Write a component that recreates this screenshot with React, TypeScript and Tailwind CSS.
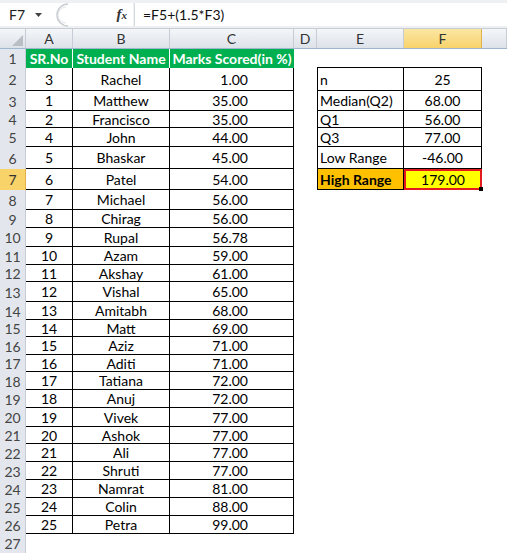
import React from "react";

const students: [number, string, string][] = [
  [3, "Rachel", "1.00"],
  [1, "Matthew", "35.00"],
  [2, "Francisco", "35.00"],
  [4, "John", "44.00"],
  [5, "Bhaskar", "45.00"],
  [6, "Patel", "54.00"],
  [7, "Michael", "56.00"],
  [8, "Chirag", "56.00"],
  [9, "Rupal", "56.78"],
  [10, "Azam", "59.00"],
  [11, "Akshay", "61.00"],
  [12, "Vishal", "65.00"],
  [13, "Amitabh", "68.00"],
  [14, "Matt", "69.00"],
  [15, "Aziz", "71.00"],
  [16, "Aditi", "71.00"],
  [17, "Tatiana", "72.00"],
  [18, "Anuj", "72.00"],
  [19, "Vivek", "77.00"],
  [20, "Ashok", "77.00"],
  [21, "Ali", "77.00"],
  [22, "Shruti", "77.00"],
  [23, "Namrat", "81.00"],
  [24, "Colin", "88.00"],
  [25, "Petra", "99.00"],
];

// row heights taken from the screenshot (rows 1..27)
const rowHeights = [
  "h-[19px]", "h-[23px]", "h-[20px]", "h-[17px]", "h-[19px]", "h-[22px]", "h-[21px]",
  "h-[20px]", "h-[18px]", "h-[19px]", "h-[18px]", "h-[17px]", "h-[20px]", "h-[18px]",
  "h-[17px]", "h-[18px]", "h-[17px]", "h-[18px]", "h-[18px]", "h-[19px]", "h-[17px]",
  "h-[18px]", "h-[18px]", "h-[18px]", "h-[18px]", "h-[18px]", "h-[19px]",
];

const stats: [string, string][] = [
  ["n", "25"],
  ["Median(Q2)", "68.00"],
  ["Q1", "56.00"],
  ["Q3", "77.00"],
  ["Low Range", "-46.00"],
  ["High Range", "179.00"],
];

// G is cut off at the right edge, so its letter doesn't show
const cols = [
  { name: "A", w: "w-[47px]" },
  { name: "B", w: "w-[97px]" },
  { name: "C", w: "w-[124px]" },
  { name: "D", w: "w-[23px]" },
  { name: "E", w: "w-[87px]" },
  { name: "F", w: "w-[78px]" },
  { name: "", w: "w-[25px]" },
];

const FormulaBar = () => (
  <div className="flex h-[29px] items-stretch border-b border-[#c8ccd3] bg-[#eef0f3] pt-[3px] pb-[2px]">
    <div className="flex w-[46px] items-center justify-between bg-white pl-[9px] pr-[4px] text-[14px] text-[#222]">
      <span>F7</span>
      <svg width="7" height="4" viewBox="0 0 7 4">
        <path d="M0 0h7L3.5 4z" fill="#444" />
      </svg>
    </div>
    <div className="flex w-[87px] items-center bg-white">
      <svg width="22" height="24" viewBox="0 0 22 24" className="ml-[2px]">
        <path d="M20 1 A11 11 0 0 0 20 23" fill="none" stroke="#c9ccd1" strokeWidth="1.5" />
        <path d="M18 4 A8 8 0 0 0 18 20" fill="none" stroke="#e3e5e8" strokeWidth="1" />
      </svg>
      <span className="ml-auto mr-[6px] font-['Liberation_Serif',serif] text-[15px] italic font-bold text-[#333]">
        f<span className="text-[11px]">x</span>
      </span>
    </div>
    <div className="ml-[1px] flex flex-1 items-center border-l border-[#d6d9de] bg-white pl-[8px] text-[14px] text-[#111]">
      =F5+(1.5*F3)
    </div>
  </div>
);

const HeaderRow = () => (
  <div className="flex h-[20px] border-b border-[#9eb6ce]">
    <div className="flex w-[26px] items-end justify-end border-r border-[#c5ccd6] bg-gradient-to-b from-[#f4f6f9] to-[#dde2e9] p-[2px]">
      <svg width="11" height="11" viewBox="0 0 11 11">
        <path d="M11 0V11H0z" fill="#b9bec6" />
      </svg>
    </div>
    {cols.map((c, i) => (
      <div
        key={i}
        className={
          c.name === "F"
            ? `${c.w} flex items-center justify-center border-r border-[#e2b24a] bg-gradient-to-b from-[#fbe6a3] to-[#f8d36a] text-[14px] text-[#333]`
            : `${c.w} flex items-center justify-center border-r border-[#c5ccd6] bg-gradient-to-b from-[#f4f6f9] to-[#dde2e9] text-[14px] text-[#333]`
        }
      >
        {c.name}
      </div>
    ))}
  </div>
);

const RowNum = ({ n }: { n: number }) => (
  <div
    className={
      n === 7
        ? "flex w-[26px] items-center justify-center border-r border-[#e2b24a] bg-[#f8d36a] text-[14px] text-[#333]"
        : "flex w-[26px] items-center justify-center border-r border-[#c5ccd6] bg-[#e3e7ed] text-[14px] text-[#444]"
    }
  >
    {n}
  </div>
);

export default function App() {
  return (
    <div className="h-[553px] w-[507px] overflow-hidden bg-white font-['Lato',sans-serif] text-[14px] text-black">
      <FormulaBar />
      <HeaderRow />

      {/* row 1: table header */}
      <div className={`flex ${rowHeights[0]}`}>
        <RowNum n={1} />
        <div className="flex w-[47px] items-center justify-center border-r border-white bg-[#00b050] font-bold text-white">
          SR.No
        </div>
        <div className="flex w-[97px] items-center justify-center border-r border-white bg-[#00b050] font-bold text-white">
          Student Name
        </div>
        <div className="flex w-[124px] items-center justify-center bg-[#00b050] font-bold whitespace-nowrap text-white">
          Marks Scored(in %)
        </div>
        <div className="w-[23px]" />
        <div className="w-[87px] border-b border-black" />
        <div className="w-[78px] border-b border-black" />
        <div className="w-[25px]" />
      </div>

      {students.map(([sr, name, mark], i) => {
        const row = i + 2;
        const stat = row <= 7 ? stats[row - 2] : null;
        return (
          <div key={row} className={`flex ${rowHeights[i + 1]}`}>
            <RowNum n={row} />
            <div className="flex w-[47px] items-center justify-center border-r border-b border-black">
              {sr}
            </div>
            <div className="flex w-[97px] items-center justify-center border-r border-b border-black">
              {name}
            </div>
            <div className="flex w-[124px] items-center justify-end border-r border-b border-black pr-[45px]">
              {mark}
            </div>
            <div className="w-[23px]" />
            {stat ? (
              row === 7 ? (
                <>
                  <div className="flex w-[87px] items-center border-x border-b border-black bg-[#ffc000] pl-[2px] font-bold">
                    {stat[0]}
                  </div>
                  <div className="relative flex w-[78px] items-center justify-center border-2 border-[#e3191f] bg-[#ffff00]">
                    {stat[1]}
                    <div className="absolute right-[-3px] bottom-[-3px] h-[4px] w-[4px] bg-black" />
                  </div>
                </>
              ) : (
                <>
                  <div className="flex w-[87px] items-center border-x border-b border-black pl-[2px]">
                    {stat[0]}
                  </div>
                  <div className="flex w-[78px] items-center justify-center border-r border-b border-black">
                    {stat[1]}
                  </div>
                </>
              )
            ) : (
              <>
                <div className="w-[87px]" />
                <div className="w-[78px]" />
              </>
            )}
            <div className="w-[25px]" />
          </div>
        );
      })}

      <div className={`flex ${rowHeights[26]}`}>
        <RowNum n={27} />
      </div>
    </div>
  );
}
